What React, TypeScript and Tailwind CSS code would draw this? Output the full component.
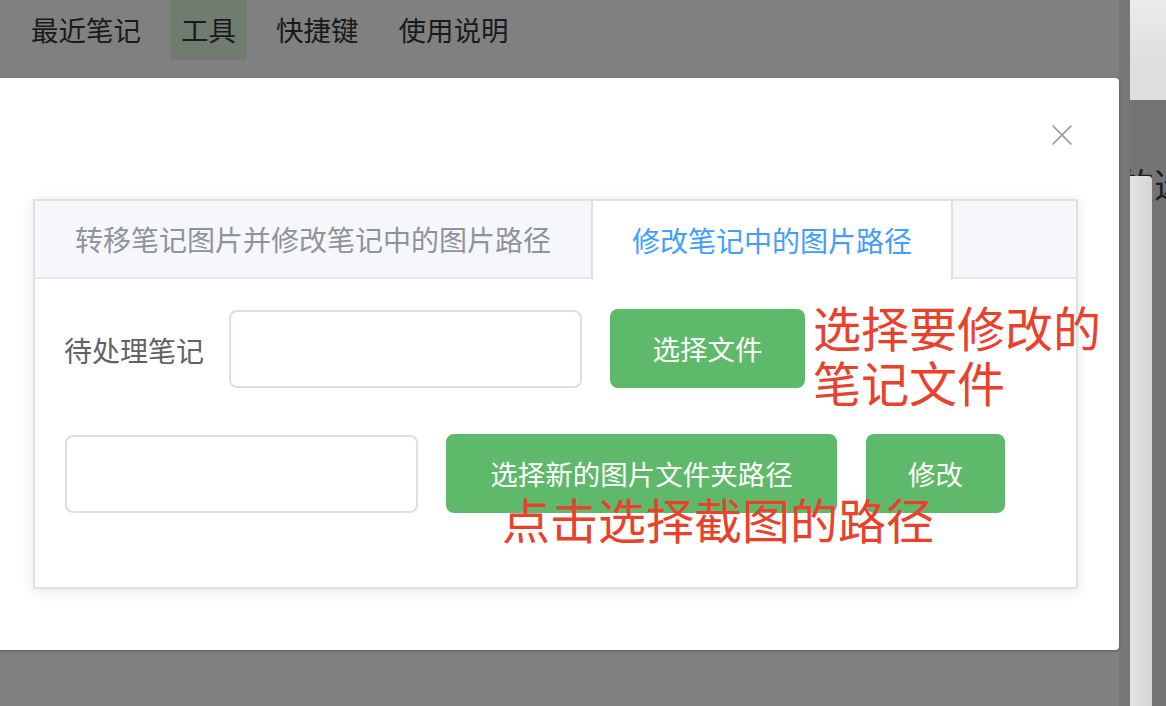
import React from "react";

const FONT = { fontFamily: '"Noto Sans CJK SC", "Noto Sans", sans-serif' };

function CloseIcon() {
  return (
    <svg width="20" height="20" viewBox="0 0 20 20" fill="none">
      <path d="M1 1 L19 19 M19 1 L1 19" stroke="#909399" strokeWidth="1.6" strokeLinecap="round" />
    </svg>
  );
}

export default function App() {
  const navItems = ["最近笔记", "工具", "快捷键", "使用说明"];
  return (
    <div className="w-[1166px] h-[706px] flex overflow-hidden" style={FONT}>
      {/* main app area dimmed by overlay */}
      <div className="relative w-[1119px] shrink-0 h-full bg-[#808080]">
        <nav className="h-[78px] flex items-start gap-[18px] pl-[20px]">
          {navItems.map((t, i) => (
            <div
              key={t}
              className={
                i === 1
                  ? "h-[60px] px-[11px] flex items-center text-[27.5px] text-[#1a1a1a] bg-[#6f7c6f] rounded-b-[4px] whitespace-nowrap"
                  : "h-[60px] px-[11px] flex items-center text-[27.5px] text-[#1a1a1a] whitespace-nowrap"
              }
            >
              {t}
            </div>
          ))}
        </nav>

        {/* modal */}
        <div className="absolute left-[-20px] top-[78px] w-[1139px] h-[572px] bg-white rounded-[4px] shadow-[0_1px_3px_rgba(0,0,0,0.3)] flex flex-col">
          <div className="relative h-[121px] shrink-0">
            <button className="absolute right-[47px] top-[47px] w-[20px] h-[20px] flex items-center justify-center">
              <CloseIcon />
            </button>
          </div>

          <div className="ml-[53px] w-[1045px] h-[390px] border-2 border-[#dfe1e6] bg-white shadow-[0_2px_12px_rgba(0,0,0,0.1)] flex flex-col">
            <div className="h-[78px] shrink-0 flex bg-[#f5f7fa] border-b-2 border-[#e4e7ed]">
              <div className="h-full px-[40px] flex items-center text-[28px] text-[#909399] whitespace-nowrap">
                转移笔记图片并修改笔记中的图片路径
              </div>
              <div className="h-[78px] -mb-[2px] px-[39px] flex items-center text-[28px] text-[#409eff] bg-white border-x-2 border-[#dcdfe6] whitespace-nowrap">
                修改笔记中的图片路径
              </div>
            </div>

            <div className="pt-[31px] pl-[29px] flex flex-col">
              <div className="h-[79px] flex items-start">
                <div className="shrink-0 self-center text-[28px] text-[#606266] leading-[40px] whitespace-nowrap">待处理笔记</div>
                <div className="shrink-0 ml-[25px] w-[353px] h-[78px] border-2 border-[#dcdfe6] rounded-[8px] bg-white" />
                <button className="shrink-0 ml-[28px] -mt-[1px] w-[195px] h-[79px] rounded-[8px] bg-[#5fb96b] text-white text-[27.5px] flex items-center justify-center whitespace-nowrap">
                  选择文件
                </button>
                <div className="shrink-0 ml-[8px] -mt-[11px] text-[48px] leading-[55px] text-[#e8412c] whitespace-nowrap">
                  选择要修改的
                  <br />
                  笔记文件
                </div>
              </div>

              <div className="relative mt-[45px] pl-[1px] flex items-start">
                <div className="shrink-0 mt-[1px] w-[353px] h-[78px] border-2 border-[#dcdfe6] rounded-[8px] bg-white" />
                <button className="shrink-0 ml-[28px] w-[391px] h-[79px] rounded-[8px] bg-[#5fb96b] text-white text-[27.5px] flex items-center justify-center whitespace-nowrap">
                  选择新的图片文件夹路径
                </button>
                <button className="shrink-0 ml-[29px] w-[139px] h-[79px] rounded-[8px] bg-[#5fb96b] text-white text-[27.5px] flex items-center justify-center whitespace-nowrap">
                  修改
                </button>
                <div className="absolute left-[438px] top-[57px] text-[48px] leading-[55px] text-[#e8412c] whitespace-nowrap">
                  点击选择截图的路径
                </div>
              </div>
            </div>
          </div>
        </div>
      </div>

      {/* scrollbar strip */}
      <div className="w-[11px] shrink-0 h-full bg-[#777777]" />

      {/* neighbouring window sliver */}
      <div className="w-[36px] shrink-0 h-full flex flex-col">
        <div className="h-[100px] shrink-0 bg-gradient-to-b from-[#ececec] via-[#e0e0e0] to-[#dedede]" />
        <div className="relative flex-1 bg-[#747474] overflow-hidden">
          <div className="mt-[62px] -ml-[10px] text-[34px] leading-[44px] text-[#1e1e1e] whitespace-nowrap">的选</div>
          <div className="absolute left-0 top-[76px] w-[22px] bottom-0 bg-gradient-to-r from-[#e4e4e4] to-[#d6d6d6] rounded-tr-[4px]" />
        </div>
      </div>
    </div>
  );
}
